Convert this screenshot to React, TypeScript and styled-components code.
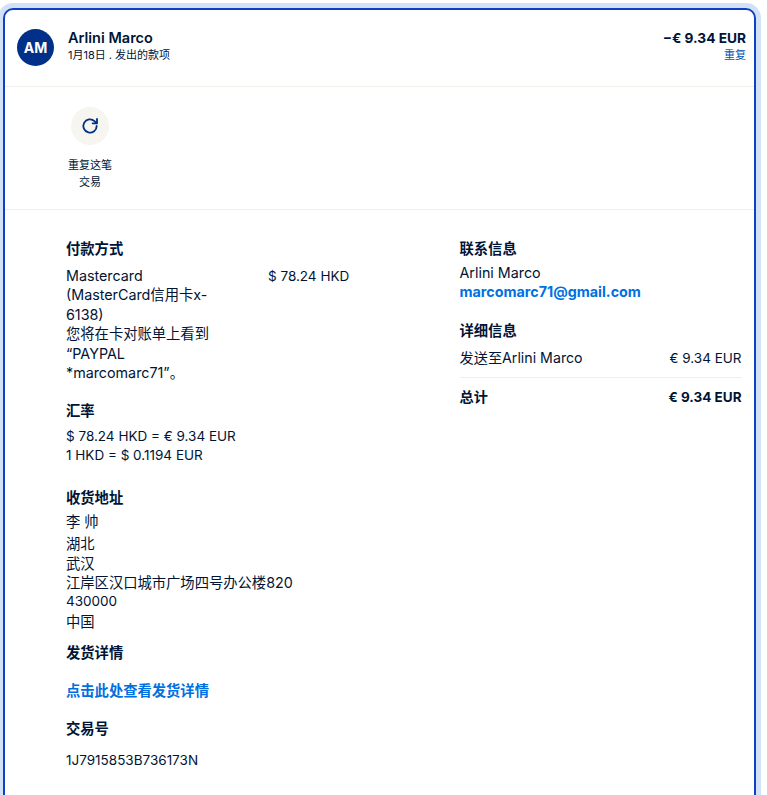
import React from 'react';
import styled, { createGlobalStyle } from 'styled-components';

const GlobalStyle = createGlobalStyle`
  html, body {
    margin: 0;
    padding: 0;
    background: #fff;
    overflow: hidden;
  }
  body {
    font-family: Inter, "Noto Sans CJK SC", sans-serif;
    color: #001435;
  }
`;

const Page = styled.div`
  height: 795px;
  padding: 8px 0 0 3px;
  box-sizing: border-box;
  overflow: hidden;
`;

const Card = styled.div`
  width: 753px;
  height: 820px;
  box-sizing: border-box;
  border: 2px solid #1040c1;
  border-radius: 10px;
  box-shadow: 0 0 0 5px #d1e1f8;
`;

const Header = styled.div`
  height: 77px;
  box-sizing: border-box;
  padding: 19px 8px 0 12px;
  display: flex;
  justify-content: space-between;
  border-bottom: 1px solid #f1efea;
`;

const Person = styled.div`
  display: flex;
  gap: 14px;
`;

const Avatar = styled.div`
  width: 37px;
  height: 37px;
  border-radius: 50%;
  background: #003087;
  color: #fff;
  font-size: 14px;
  font-weight: 700;
  display: flex;
  align-items: center;
  justify-content: center;
`;

const PersonName = styled.div`
  font-size: 14.5px;
  font-weight: 600;
  line-height: 18px;
`;

const PersonMeta = styled.div`
  font-size: 11px;
  line-height: 16px;
  color: #001435;
`;

const Amount = styled.div`
  text-align: right;
`;

const AmountValue = styled.div`
  font-size: 13.7px;
  font-weight: 700;
  line-height: 18px;
`;

const AmountTag = styled.div`
  font-size: 11px;
  line-height: 16px;
  color: #0551b5;
`;

const Actions = styled.div`
  height: 123px;
  box-sizing: border-box;
  padding: 20px 0 0 60px;
  border-bottom: 1px solid #eeeeee;
`;

const Action = styled.div`
  width: 50px;
  display: flex;
  flex-direction: column;
  align-items: center;
`;

const ActionIcon = styled.div`
  width: 38px;
  height: 38px;
  border-radius: 50%;
  background: #f7f5f0;
  color: #003087;
  display: flex;
  align-items: center;
  justify-content: center;
`;

const ActionLabel = styled.div`
  margin-top: 12px;
  font-size: 11px;
  line-height: 17px;
  text-align: center;
`;

const Details = styled.div`
  display: grid;
  grid-template-columns: 393.5px 282px;
  padding: 29px 0 0 61px;
`;

const Column = styled.div`
  display: flex;
  flex-direction: column;
`;

const SectionTitle = styled.div<{ $gap: number }>`
  font-size: 14.3px;
  font-weight: 700;
  line-height: 20px;
  margin-bottom: ${(p) => p.$gap}px;
`;

const Section = styled.div<{ $bottom?: number }>`
  margin-bottom: ${(p) => p.$bottom ?? 0}px;
`;

const Text = styled.div<{ $num?: boolean; $bottom?: number }>`
  font-size: ${(p) => (p.$num ? 13.5 : 14.3)}px;
  line-height: 19.4px;
  margin-bottom: ${(p) => p.$bottom ?? 0}px;
`;

const PaymentRow = styled.div`
  display: flex;
`;

const PaymentText = styled(Text)`
  width: 146px;
  margin-right: 56px;
`;

const PaymentAmount = styled(Text)`
  padding-top: 1px;
`;

const Link = styled.a`
  display: block;
  font-size: 14.3px;
  font-weight: 700;
  line-height: 19.4px;
  color: #0070e0;
  text-decoration: none;
`;

const LineItem = styled.div<{ $strong?: boolean; $rule?: boolean }>`
  display: flex;
  justify-content: space-between;
  align-items: baseline;
  font-size: 14.2px;
  line-height: 19px;
  font-weight: ${(p) => (p.$strong ? 700 : 400)};
  padding-bottom: ${(p) => (p.$rule ? 9 : 0)}px;
  margin-bottom: ${(p) => (p.$rule ? 9 : 0)}px;
  border-bottom: ${(p) => (p.$rule ? '1px solid #eeeeee' : 'none')};
`;

const LineValue = styled.span`
  font-size: 13.5px;
`;

const RefreshIcon = () => (
  <svg width="20" height="20" viewBox="0 0 24 24" fill="none" stroke="currentColor" strokeWidth="2.2" strokeLinecap="round" strokeLinejoin="round">
    <path d="M20 12a8 8 0 1 1-2.6-5.9L20 8.5" />
    <path d="M20.4 3.6v5.2h-5.2" />
  </svg>
);

export default function App() {
  return (
    <>
      <GlobalStyle />
      <Page>
        <Card>
          <Header>
            <Person>
              <Avatar>AM</Avatar>
              <div>
                <PersonName>Arlini Marco</PersonName>
                <PersonMeta>1月18日 . 发出的款项</PersonMeta>
              </div>
            </Person>
            <Amount>
              <AmountValue>−€ 9.34 EUR</AmountValue>
              <AmountTag>重复</AmountTag>
            </Amount>
          </Header>
          <Actions>
            <Action>
              <ActionIcon>
                <RefreshIcon />
              </ActionIcon>
              <ActionLabel>重复这笔交易</ActionLabel>
            </Action>
          </Actions>
          <Details>
            <Column>
              <Section $bottom={19}>
                <SectionTitle $gap={7}>付款方式</SectionTitle>
                <PaymentRow>
                  <PaymentText>
                    Mastercard
                    <br />
                    (MasterCard信用卡x-6138)
                    <br />
                    您将在卡对账单上看到
                    <br />
                    “PAYPAL
                    <br />
                    *marcomarc71”。
                  </PaymentText>
                  <PaymentAmount $num>$ 78.24 HKD</PaymentAmount>
                </PaymentRow>
              </Section>
              <Section $bottom={22.4}>
                <SectionTitle $gap={5.6}>汇率</SectionTitle>
                <Text $num>$ 78.24 HKD = € 9.34 EUR</Text>
                <Text $num>1 HKD = $ 0.1194 EUR</Text>
              </Section>
              <Section $bottom={12}>
                <SectionTitle $gap={4}>收货地址</SectionTitle>
                <Text $bottom={2.6}>李 帅</Text>
                <Text>湖北</Text>
                <Text>武汉</Text>
                <Text>江岸区汉口城市广场四号办公楼820</Text>
                <Text $num>430000</Text>
                <Text>中国</Text>
              </Section>
              <Section $bottom={18}>
                <SectionTitle $gap={18}>发货详情</SectionTitle>
                <Link>点击此处查看发货详情</Link>
              </Section>
              <Section>
                <SectionTitle $gap={12}>交易号</SectionTitle>
                <Text $num>1J7915853B736173N</Text>
              </Section>
            </Column>
            <Column>
              <Section $bottom={19}>
                <SectionTitle $gap={4}>联系信息</SectionTitle>
                <Text>Arlini Marco</Text>
                <Link>marcomarc71@gmail.com</Link>
              </Section>
              <Section>
                <SectionTitle $gap={7}>详细信息</SectionTitle>
                <LineItem $rule>
                  <span>发送至Arlini Marco</span>
                  <LineValue>€ 9.34 EUR</LineValue>
                </LineItem>
                <LineItem $strong>
                  <span>总计</span>
                  <LineValue>€ 9.34 EUR</LineValue>
                </LineItem>
              </Section>
            </Column>
          </Details>
        </Card>
      </Page>
    </>
  );
}
